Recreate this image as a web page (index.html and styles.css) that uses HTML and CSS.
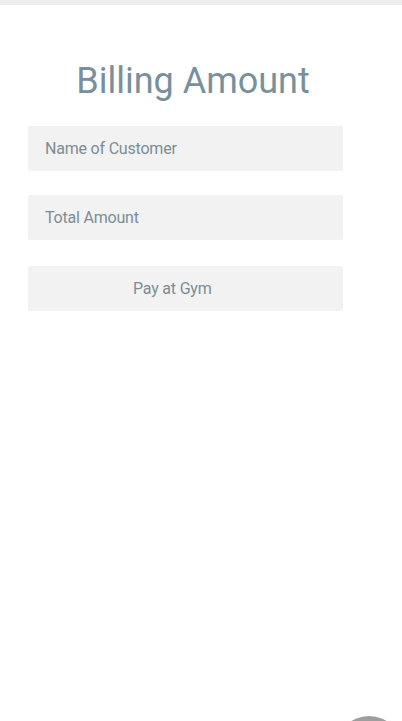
FILE: index.html
```html
<!DOCTYPE html>
<html lang="en">
<head>
<meta charset="utf-8">
<title>Billing Amount</title>
<link rel="stylesheet" href="styles.css">
</head>
<body>
<div class="topbar"></div>
<main class="page">
  <h1 class="title">Billing Amount</h1>
  <form class="form">
    <div class="field">Name of Customer</div>
    <div class="field">Total Amount</div>
    <div class="field button">Pay at Gym</div>
  </form>
</main>
<div class="fab"></div>
</body>
</html>
```
FILE: styles.css
```css
html, body {
  margin: 0;
  padding: 0;
  background: #ffffff;
  font-family: Roboto, "Liberation Sans", sans-serif;
  overflow: hidden;
  height: 721px;
}
.topbar {
  height: 5px;
  background: #eeeeee;
}
.page {
  display: flex;
  flex-direction: column;
}
.title {
  margin: 56px 0 0 0;
  padding-right: 16px;
  font-size: 36px;
  line-height: 40px;
  font-weight: 400;
  color: #78909c;
  text-align: center;
}
.form {
  display: flex;
  flex-direction: column;
  margin: 25px 0 0 28px;
  width: 315px;
}
.field {
  height: 45px;
  line-height: 45px;
  background: #f2f2f2;
  border-radius: 2px;
  padding-left: 17px;
  font-size: 16px;
  letter-spacing: -0.2px;
  color: #7b8d95;
  margin-bottom: 24px;
}
.field:nth-child(2) {
  margin-bottom: 26px;
}
.button {
  padding-left: 105px;
}
.fab {
  position: fixed;
  left: 334px;
  top: 716px;
  width: 70px;
  height: 70px;
  border-radius: 50%;
  background: #9e9e9e;
}
```
